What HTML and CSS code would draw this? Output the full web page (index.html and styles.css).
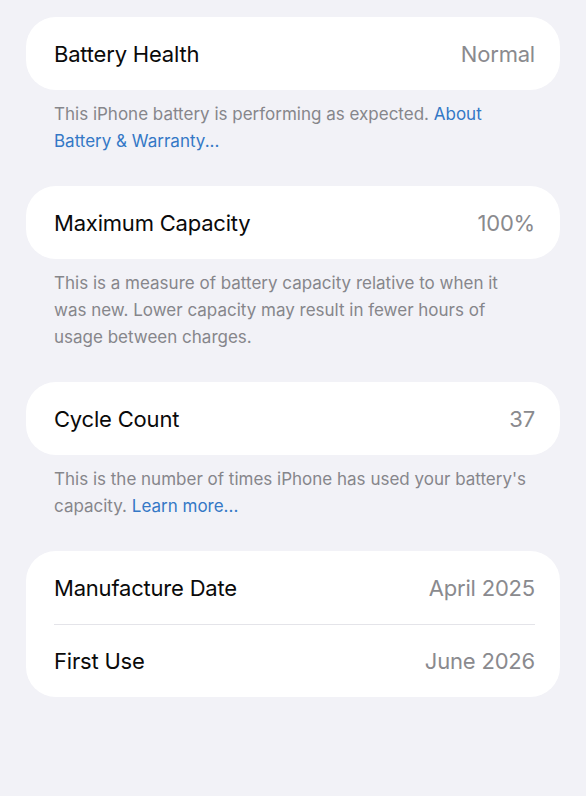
FILE: index.html
```html
<!DOCTYPE html>
<html>
<head>
  <meta charset="UTF-8">
  <title>Battery Health</title>
  <link rel="stylesheet" href="styles.css">
</head>
<body>
  <div class="settings">
    <div class="card">
      <div class="row">
        <span class="label">Battery Health</span>
        <span class="value">Normal</span>
      </div>
    </div>
    <p class="footnote">This iPhone battery is performing as expected. <a href="#">About Battery &amp; Warranty...</a></p>

    <div class="card">
      <div class="row">
        <span class="label">Maximum Capacity</span>
        <span class="value">100%</span>
      </div>
    </div>
    <p class="footnote">This is a measure of battery capacity relative to when it was new. Lower capacity may result in fewer hours of usage between charges.</p>

    <div class="card">
      <div class="row">
        <span class="label">Cycle Count</span>
        <span class="value">37</span>
      </div>
    </div>
    <p class="footnote">This is the number of times iPhone has used your battery's capacity. <a href="#">Learn more...</a></p>

    <div class="card">
      <div class="row">
        <span class="label">Manufacture Date</span>
        <span class="value">April 2025</span>
      </div>
      <div class="row">
        <span class="label">First Use</span>
        <span class="value">June 2026</span>
      </div>
    </div>
  </div>
</body>
</html>
```

FILE: styles.css
```css
body {
  margin: 0;
  background-color: #f2f2f7;
  font-family: Inter, "Noto Sans", sans-serif;
  -webkit-font-smoothing: antialiased;
}
.settings {
  padding: 17px 26px 40px;
}
.card {
  background-color: #fff;
  border-radius: 30px;
  padding: 0 25px 0 28px;
  margin-top: 31px;
}
.card:first-child {
  margin-top: 0;
}
.row {
  display: flex;
  justify-content: space-between;
  align-items: center;
  height: 73px;
  font-size: 22px;
  letter-spacing: -0.2px;
}
.row + .row {
  border-top: 1px solid #e4e4e9;
  height: 72px;
}
.label {
  color: #0a0a0a;
}
.value {
  color: #8a8a8e;
}
.footnote {
  margin: 11px 0 0;
  padding: 0 28px;
  font-size: 17px;
  line-height: 27px;
  color: #86868b;
}
.footnote a {
  color: #3478c6;
  text-decoration: none;
}
```
